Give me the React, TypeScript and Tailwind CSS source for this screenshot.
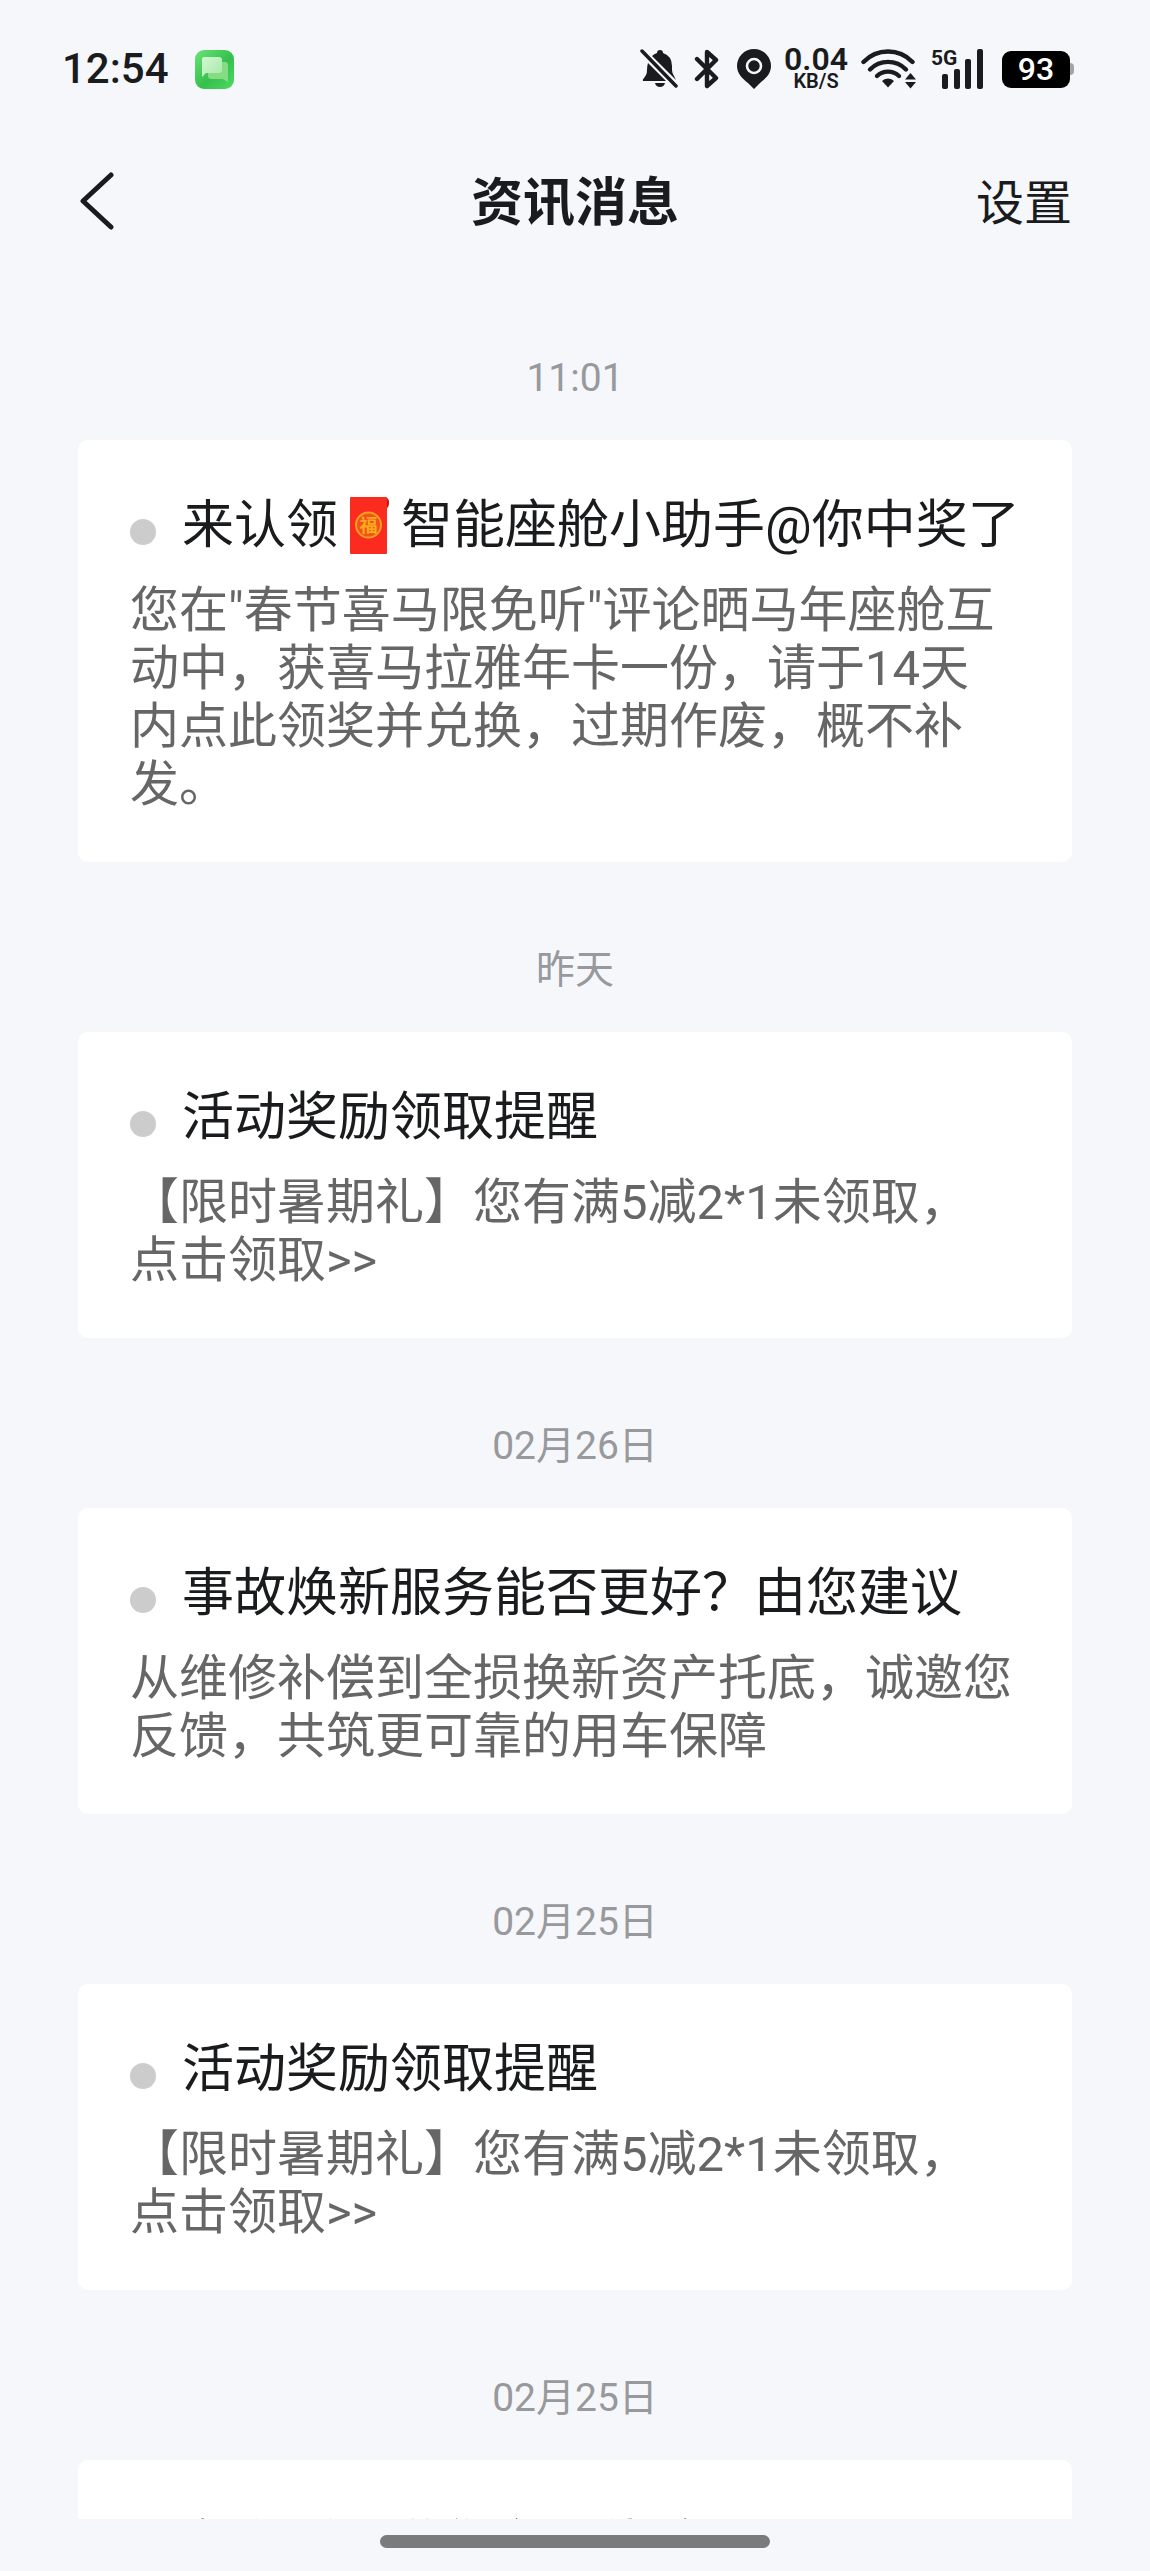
interface Message {
  id: number
  time: string
  title: React.ReactNode
  body?: string
}

function RedEnvelope() {
  return (
    <svg viewBox="0 0 39 57" className="inline-block w-[39px] h-[57px] mx-3 -mt-2 align-middle" role="img" aria-label="红包">
      <rect width="37" height="57" rx="1" fill="#fb2b20" />
      <path d="M37 1c2 1 2 3 2 5s-1 5-2 5z" fill="#c5121a" />
      <circle cx="18.5" cy="28" r="12.5" fill="#f4511e" stroke="#fba31c" strokeWidth="2" />
      <text x="18.5" y="34.5" textAnchor="middle" fontSize="18" fontWeight="700" fill="#fbab1c">福</text>
    </svg>
  )
}

const messages: Message[] = [
  {
    id: 1,
    time: '11:01',
    title: <>来认领<RedEnvelope />智能座舱小助手@你中奖了</>,
    body: '您在"春节喜马限免听"评论晒马年座舱互动中，获喜马拉雅年卡一份，请于14天内点此领奖并兑换，过期作废，概不补发。',
  },
  { id: 2, time: '昨天', title: '活动奖励领取提醒', body: '【限时暑期礼】您有满5减2*1未领取，点击领取>>' },
  {
    id: 3,
    time: '02月26日',
    title: '事故焕新服务能否更好？由您建议',
    body: '从维修补偿到全损换新资产托底，诚邀您反馈，共筑更可靠的用车保障',
  },
  { id: 4, time: '02月25日', title: '活动奖励领取提醒', body: '【限时暑期礼】您有满5减2*1未领取，点击领取>>' },
  { id: 5, time: '02月25日', title: '车主活动邀您参与体验吧' },
]

function ChatAppIcon() {
  return (
    <svg viewBox="0 0 39 39" className="w-[39px] h-[39px]">
      <defs>
        <linearGradient id="chat-bg" x1="0" y1="0" x2="1" y2="1">
          <stop offset="0" stopColor="#6be37a" />
          <stop offset="0.55" stopColor="#35c04c" />
          <stop offset="1" stopColor="#4cd964" />
        </linearGradient>
        <linearGradient id="chat-bubble" x1="0" y1="0" x2="1" y2="1">
          <stop offset="0" stopColor="#d2f7d2" />
          <stop offset="1" stopColor="#a5e8a9" />
        </linearGradient>
      </defs>
      <rect width="39" height="39" rx="9" fill="url(#chat-bg)" />
      <path d="M15 12h15q3 0 3 3v17l-5-3H16q-3 0-3-3V14q0-2 2-2z" fill="#86dc84" />
      <path d="M9 7h15q3 0 3 3v10q0 3-3 3H11l-4 4V9q0-2 2-2z" fill="url(#chat-bubble)" />
    </svg>
  )
}

function BellOffIcon() {
  return (
    <svg viewBox="0 0 38 40" className="w-[38px] h-10" fill="#1a1b1d">
      <path d="M8 14L26 32H3q-1-1 1-3l2-3q1-1 1-5 0-4 1-7z" />
      <path d="M12 7q2-2 5-3 0-3 3-3t3 3q9 3 9 13v4q0 3 2 6l2 4z" />
      <path d="M15 34h10q-1 4-5 4t-5-4z" />
      <path d="M2 2L36 37" stroke="#1a1b1d" strokeWidth="3.5" strokeLinecap="round" />
    </svg>
  )
}

function BluetoothIcon() {
  return (
    <svg viewBox="0 0 25 40" className="w-[25px] h-10" fill="none" stroke="#1a1b1d" strokeWidth="4.4" strokeLinejoin="round" strokeLinecap="round">
      <path d="M3 10L22 29L13 37V3L22 11L3 30" />
    </svg>
  )
}

function PinIcon() {
  return (
    <svg viewBox="0 0 34 40" className="w-[34px] h-10">
      <path d="M17 0a17 17 0 0 1 17 17c0 8-6 13-11 17l-6 6-6-6C6 30 0 25 0 17A17 17 0 0 1 17 0z" fill="#1a1b1d" />
      <circle cx="17" cy="17" r="7" fill="#1a1b1d" stroke="#f5f7fb" strokeWidth="2.6" />
    </svg>
  )
}

function WifiIcon() {
  return (
    <svg viewBox="0 0 55 40" className="w-[55px] h-10" fill="none" stroke="#1a1b1d" strokeWidth="4.4" strokeLinecap="round">
      <path d="M2.500 13A34 34 0 0 1 51.500 13" />
      <path d="M9 20.500A25 25 0 0 1 45 20.500" />
      <path d="M16 27A16 16 0 0 1 38 27" />
      <path d="M27 29.500q4 0 6 2.500l-6 6.500-6-6.500q2-2.500 6-2.500z" fill="#1a1b1d" stroke="none" />
      <path d="M49.500 24l5.500 6.500H44zM49.500 39.500l-5.500-6.500h11z" fill="#1a1b1d" stroke="none" />
    </svg>
  )
}

function SignalIcon() {
  return (
    <svg viewBox="0 0 52 40" className="w-[52px] h-10 overflow-visible" fill="#1a1b1d">
      <text x="-1" y="16" fontSize="21" fontWeight="700" fontFamily="Roboto">5G</text>
      <rect x="10" y="25" width="6" height="15" rx="2" />
      <rect x="22" y="20" width="6" height="20" rx="2" />
      <rect x="33" y="10" width="6" height="30" rx="2" />
      <rect x="45" y="0" width="6" height="40" rx="2" />
    </svg>
  )
}

function StatusBar() {
  return (
    <div className="h-[138px] shrink-0 pl-[62px] pr-[76px] flex items-center justify-between">
      <div className="flex items-center gap-[26px]">
        <span className="text-[42px] leading-none font-medium">12:54</span>
        <ChatAppIcon />
      </div>
      <div className="flex items-center">
        <BellOffIcon />
        <div className="ml-4"><BluetoothIcon /></div>
        <div className="ml-[18px]"><PinIcon /></div>
        <div className="ml-3 w-[66px] flex flex-col items-center font-semibold">
          <span className="text-[32px] leading-[24px]">0.04</span>
          <span className="text-[20px] leading-[20px]">KB/S</span>
        </div>
        <div className="ml-3"><WifiIcon /></div>
        <div className="ml-4"><SignalIcon /></div>
        <div className="ml-[18px] flex items-center">
          <span className="w-[68px] h-[37px] rounded-[9px] bg-black text-white text-[32px] leading-[37px] font-medium text-center">93</span>
          <span className="w-1 h-3 rounded-r bg-[#a3a4a6]" />
        </div>
      </div>
    </div>
  )
}

function MessageCard({ message }: { message: Message }) {
  return (
    <section>
      <p className="pt-20 pb-[34px] text-[39px] leading-[56px] text-center text-[#98999c]">{message.time}</p>
      <article className="bg-white rounded-[10px] pt-[50px] pb-12 pl-[52px] pr-[56px]">
        <div className="flex items-center gap-[26px]">
          <span className="w-[26px] h-[26px] mt-3 shrink-0 rounded-full bg-[#cccccc]" />
          <h2 className="text-[52px] leading-[72px] whitespace-nowrap">{message.title}</h2>
        </div>
        {message.body && (
          <p className="mt-5 text-[49px] leading-[58px] text-[#666666]">{message.body}</p>
        )}
      </article>
    </section>
  )
}

export default function App() {
  return (
    <div className="h-screen flex flex-col bg-[#f5f7fb] text-[#1a1b1d] font-[Roboto,'Noto_Sans_CJK_SC',sans-serif]">
      <StatusBar />

      {/* Header */}
      <header className="h-[132px] shrink-0 px-[78px] grid grid-cols-3 items-center">
        <button aria-label="返回" className="justify-self-start pb-2">
          <svg viewBox="0 0 36 60" className="w-9 h-[60px]" fill="none" stroke="#1a1b1d" strokeWidth="5" strokeLinecap="round" strokeLinejoin="round">
            <path d="M33 5L5 31L33 57" />
          </svg>
        </button>
        <h1 className="text-[52px] leading-[72px] font-bold text-center">资讯消息</h1>
        <button className="justify-self-end text-[48px] leading-[72px]">设置</button>
      </header>

      {/* Message list */}
      <main className="flex-1 min-h-0 overflow-hidden px-[78px]">
        {messages.map((message) => (
          <MessageCard key={message.id} message={message} />
        ))}
      </main>

      {/* Home indicator */}
      <div className="h-[52px] shrink-0 pt-4 flex justify-center">
        <div className="w-[390px] h-[13px] rounded-full bg-[#7a7b7d]" />
      </div>
    </div>
  )
}
